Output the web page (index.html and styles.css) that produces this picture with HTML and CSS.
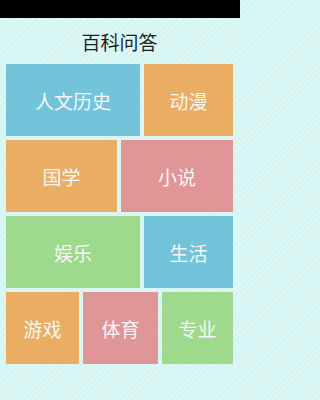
FILE: index.html
```html
<!DOCTYPE html>
<html lang="zh">
<head>
<meta charset="utf-8">
<link rel="stylesheet" href="styles.css">
</head>
<body>
<div class="statusbar"></div>
<div class="page">
  <h1 class="title">百科问答</h1>
  <div class="grid">
    <div class="row row-a">
      <div class="tile blue">人文历史</div>
      <div class="tile orange">动漫</div>
    </div>
    <div class="row row-b">
      <div class="tile orange">国学</div>
      <div class="tile pink">小说</div>
    </div>
    <div class="row row-a">
      <div class="tile green">娱乐</div>
      <div class="tile blue">生活</div>
    </div>
    <div class="row row-c">
      <div class="tile orange">游戏</div>
      <div class="tile pink">体育</div>
      <div class="tile green">专业</div>
    </div>
  </div>
</div>
</body>
</html>
```
FILE: styles.css
```css
html, body {
  margin: 0;
  padding: 0;
  width: 240px;
  height: 400px;
  overflow: hidden;
}
body {
  font-family: "Noto Sans CJK SC", "Noto Sans", sans-serif;
  background-color: #d8f6f4;
  background-image: repeating-linear-gradient(-45deg, #d3f4f2 0px, #d3f4f2 2px, #def8f6 2px, #def8f6 4px);
}
.statusbar {
  height: 18px;
  background: #000;
}
.page {
  padding: 0 7px 0 6px;
}
.title {
  margin: 0;
  height: 46px;
  display: flex;
  align-items: center;
  justify-content: center;
  font-size: 19px;
  font-weight: normal;
  color: #1e1e1e;
}
.grid {
  display: flex;
  flex-direction: column;
  gap: 4px;
}
.row {
  display: grid;
  gap: 4px;
  height: 72px;
}
.row-a { grid-template-columns: 134px 1fr; }
.row-b { grid-template-columns: 111px 1fr; }
.row-c { grid-template-columns: 73px 75px 1fr; }
.tile {
  display: flex;
  align-items: center;
  justify-content: center;
  color: #f6f6f6;
  font-size: 19px;
}
.blue { background: #73c3da; }
.orange { background: #e9ad64; }
.pink { background: #e09597; }
.green { background: #9fd98d; }
```
